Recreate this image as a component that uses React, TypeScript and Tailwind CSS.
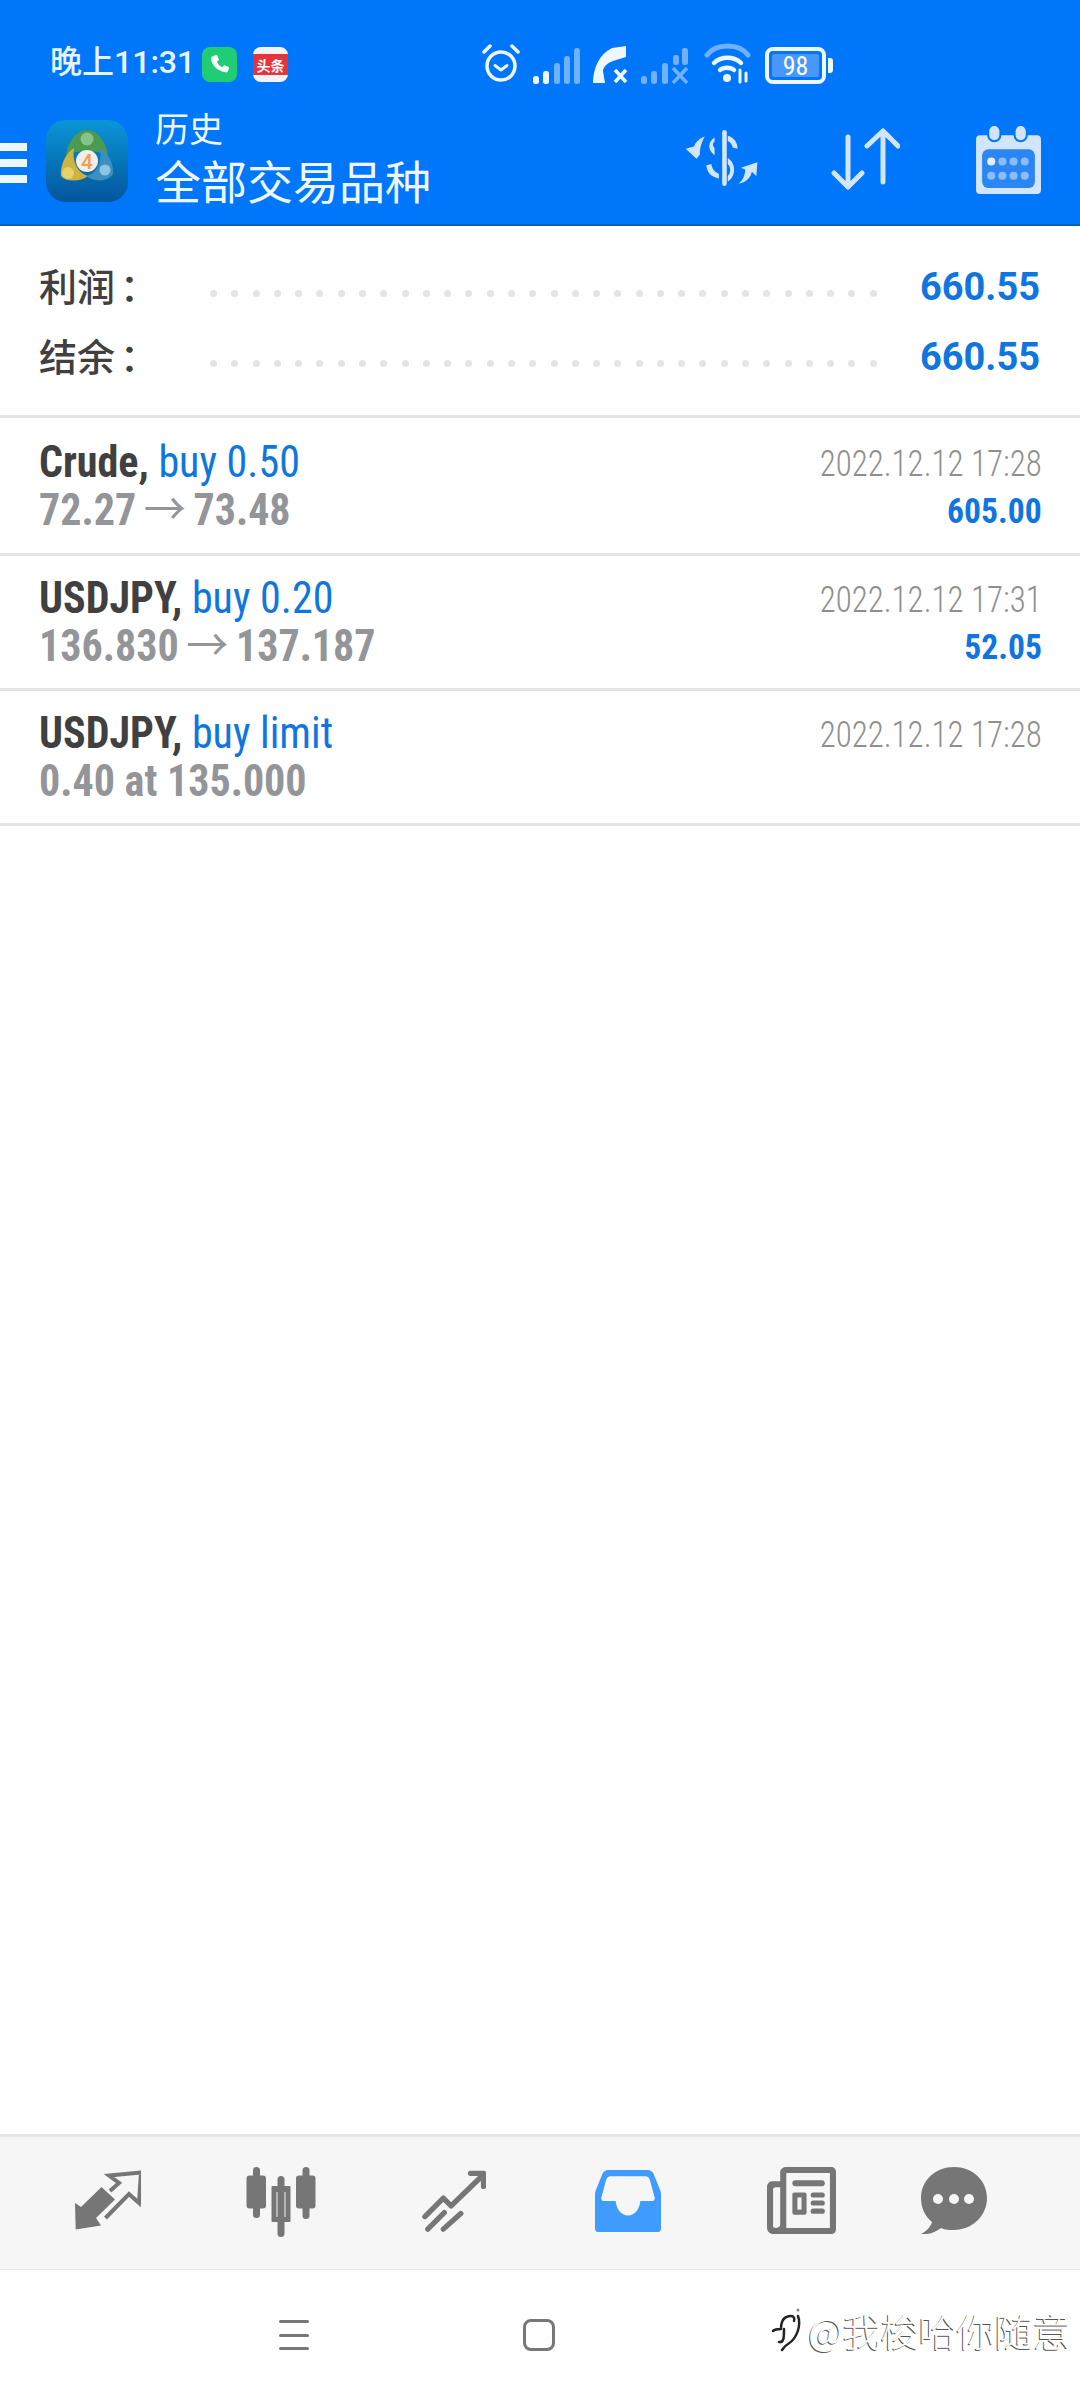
const BLUE_TEXT = "text-[#0f76e0]";

const HEADER_ICON = "#d3e5fd";
const NAV_ICON = "#767676";
const BAR_ON = "#eef6ff";
const BAR_OFF = "#6fb0ff";

function StatusBar() {
  return (
    <div className="flex h-[102px] items-end pb-[20px] pl-[50px] text-white">
      <span className="w-[146px] whitespace-nowrap text-[32px] leading-[40px] font-['Roboto','Noto_Sans_CJK_SC',sans-serif] font-medium text-[#e8f3ff]">
        晚上11:31
      </span>
      <div className="ml-[6px] flex h-[35px] w-[35px] items-center justify-center rounded-[8px] bg-[#1fce74]">
        <svg width="23" height="23" viewBox="0 0 24 24" fill="#fff">
          <path d="M6.600 2.500 9.500 2l2 5-2.200 2c.9 2.400 2.900 4.700 5.600 5.800l2-2.200 5 2.200-.6 3.200c-.3 1.400-1.500 2.400-3 2.200C10 19 3.500 12.500 3.200 6c0-1.800 1.700-3.200 3.400-3.500z" />
        </svg>
      </div>
      <div className="ml-[16px] flex h-[35px] w-[35px] items-center justify-center overflow-hidden rounded-[8px] bg-[#f4f4f4]">
        <div className="flex h-[21px] w-full items-center justify-center bg-[#e6333c] text-[14px] leading-none font-bold text-white font-['Noto_Sans_CJK_SC',sans-serif] whitespace-nowrap">
          头条
        </div>
      </div>
      <div className="ml-[193px] -mb-[2px] flex items-end gap-[12px]">
        <svg width="40" height="42" viewBox="0 0 40 42" fill="none" stroke={BAR_ON} strokeWidth="3.500" strokeLinecap="round" strokeLinejoin="round">
          <circle cx="20" cy="24" r="14" />
          <path d="M14 23.500 20 28l6-4.500" strokeWidth="3" />
          <path d="M3 10 9 4M37 10l-6-6" />
        </svg>
        <svg width="48" height="37" viewBox="0 0 48 37">
          <rect x="0" y="29" width="6" height="8" rx="2.500" fill={BAR_ON} />
          <rect x="10" y="24" width="6" height="13" rx="2.500" fill={BAR_ON} />
          <rect x="21" y="16" width="6" height="21" rx="2.500" fill={BAR_OFF} />
          <rect x="31" y="9" width="6" height="28" rx="2.500" fill={BAR_OFF} />
          <rect x="41" y="1" width="6" height="36" rx="2.500" fill={BAR_OFF} />
        </svg>
        <svg width="36" height="39" viewBox="0 0 36 39">
          <path d="M0 38C0 24 6 9 19 3L33 1v11l-10 3C15 17 10 22 10 26l2 12z" fill={BAR_ON} />
          <path d="m22 25 11 12m0-12L22 37" stroke={BAR_ON} strokeWidth="3.500" />
        </svg>
        <svg width="48" height="37" viewBox="0 0 48 37" fill={BAR_OFF}>
          <rect x="0" y="29" width="6" height="8" rx="2.500" />
          <rect x="10" y="24" width="6" height="13" rx="2.500" />
          <rect x="21" y="16" width="6" height="21" rx="2.500" />
          <rect x="32" y="8" width="6" height="10" rx="2.500" />
          <rect x="41" y="1" width="6" height="17" rx="2.500" />
          <path d="m32 21 14 15m0-15L32 36" stroke={BAR_OFF} strokeWidth="3.500" />
        </svg>
        <svg width="47" height="42" viewBox="0 0 47 42" className="ml-[3px]" fill="none" strokeLinecap="round">
          <path d="M3 13C12 1 35 1 44 13" stroke={BAR_OFF} strokeWidth="5" />
          <path d="M10 21c7-7 20-7 27 0" stroke={BAR_ON} strokeWidth="4.500" />
          <path d="M16 28c3-3 11-3 14 0" stroke={BAR_ON} strokeWidth="4.500" />
          <circle cx="23" cy="36" r="4" fill={BAR_ON} />
          <path d="M36 28v12M42 31v8" stroke={BAR_ON} strokeWidth="3" />
        </svg>
        <div className="ml-[2px] flex items-center">
          <div className="flex h-[37px] w-[61px] items-center rounded-[8px] border-[4px] border-[#eef6ff] p-[3px]">
            <div className="flex h-full w-full items-center justify-center rounded-[2px] bg-[#4a97fb] font-['Roboto',sans-serif] text-[26px] [font-stretch:75%] leading-none text-white">
              98
            </div>
          </div>
          <div className="ml-[2px] h-[15px] w-[5px] rounded-r-[3px] bg-[#eef6ff]" />
        </div>
      </div>
    </div>
  );
}

function MtLogo() {
  return (
    <svg width="82" height="82" viewBox="0 0 82 82">
      <defs>
        <linearGradient id="logoBg" x1="0" y1="0" x2="0" y2="1">
          <stop offset="0" stopColor="#0a96d8" />
          <stop offset="1" stopColor="#04559c" />
        </linearGradient>
      </defs>
      <rect width="82" height="82" rx="20" fill="url(#logoBg)" />
      <path d="M41 10c11 0 19 12 21 25-7-5-35-5-42 0 2-13 10-25 21-25z" fill="#4c9a52" />
      <circle cx="41" cy="19" r="6.500" fill="#86c48a" />
      <path d="M28 28C18 34 14 48 15 56c5 6 19 6 27 0-12-4-16-16-14-28z" fill="#cdb33f" />
      <circle cx="22" cy="53" r="6" fill="#e4d26c" />
      <path d="M54 28c10 6 14 18 13 26-5 8-19 8-27 2 12-2 16-16 14-28z" fill="#3c8fbe" />
      <circle cx="59" cy="50" r="5.500" fill="#8cc6e4" />
      <circle cx="41" cy="41" r="11" fill="#f3efe6" />
      <text x="41" y="49" textAnchor="middle" fontSize="21" fontWeight="500" fill="#ee9f55" fontFamily="Roboto">4</text>
    </svg>
  );
}

function TitleBar() {
  return (
    <div className="flex h-[124px] border-b-[2px] border-[#0f5fb8]">
      <div className="mt-[41px] flex h-[40px] w-[27px] flex-col justify-between">
        <div className="h-[8px] bg-[#eef6ff]" />
        <div className="h-[8px] bg-[#eef6ff]" />
        <div className="h-[8px] bg-[#eef6ff]" />
      </div>
      <div className="ml-[19px] mt-[18px]">
        <MtLogo />
      </div>
      <div className="ml-[27px] flex flex-col font-['Noto_Sans_CJK_SC',sans-serif] text-[#eef6ff]">
        <span className="mt-[6px] text-[34px] leading-[40px]">历史</span>
        <span className="mt-[3px] text-[46px] leading-[56px] whitespace-nowrap">全部交易品种</span>
      </div>
      <div className="ml-auto mr-[39px] mt-[23px] flex items-start">
        <svg width="74" height="58" viewBox="45 65 225 170" className="mt-[4px]" fill={HEADER_ICON}>
          <rect x="158" y="65" width="14" height="170" rx="7" />
          <path d="M135 88c-20 12-23 37 0 54v-22c-7-8-7-15 0-20z" />
          <path d="M175 82c15 3 30 18 30 40l-15-4c-2-10-7-16-15-20z" />
          <path d="M175 150c25 15 27 55 0 72v-17c10-10 10-27 0-37z" />
          <path d="m110 172 15-4c3 17 10 24 23 30v14c-23-4-36-17-38-40z" />
          <path d="M105 85c-10 20-15 33-15 55l-10 12-33-30 25-7c6-15 18-25 33-30z" />
          <path d="M208 228c14-10 20-28 20-43l-13-5 50-17-3 42-14-13c-3 18-18 33-40 36z" />
        </svg>
        <svg width="69" height="62" viewBox="0 0 69 62" className="ml-[72px] mt-[3px]" fill="none" stroke={HEADER_ICON} strokeWidth="5" strokeLinecap="round" strokeLinejoin="round">
          <path d="M17 9v50M3 45l14 14 14-14" />
          <path d="M52 3v51M36 18 52 3l15 15" />
        </svg>
        <svg width="65" height="69" viewBox="0 0 64 68" className="ml-[76px]">
          <rect x="0" y="10" width="64" height="58" rx="4" fill={HEADER_ICON} />
          <rect x="12" y="0" width="12" height="16" rx="6" fill={HEADER_ICON} stroke="#0077fb" strokeWidth="2" />
          <rect x="38" y="0" width="12" height="16" rx="6" fill={HEADER_ICON} stroke="#0077fb" strokeWidth="2" />
          <rect x="6" y="24" width="52" height="38" rx="6" fill="#2a86f3" />
          <circle cx="15" cy="36" r="4" fill="#e4effd" />
          {[26, 37, 48].map((x) => (
            <circle key={x} cx={x} cy="36" r="4" fill="#8dbdf8" />
          ))}
          {[15, 26, 37, 48].map((x) => (
            <circle key={x} cx={x} cy="50" r="4" fill="#8dbdf8" />
          ))}
        </svg>
      </div>
    </div>
  );
}

function SummaryRow({ label, value }: { label: string; value: string }) {
  return (
    <div className="flex h-[70px] items-center pl-[39px] pr-[40px]">
      <span className="mb-[5px] w-[171px] whitespace-nowrap text-[38px] font-medium leading-[46px] text-[#404040] font-['Noto_Sans_CJK_SC',sans-serif]">
        {label}
        <span className="ml-[5px]">：</span>
      </span>
      <div className="mt-[12px] flex w-[667px] justify-between">
        {Array.from({ length: 32 }, (_, i) => (
          <span key={i} className="h-[7px] w-[7px] rounded-full bg-[#e4e4e4]" />
        ))}
      </div>
      <span className={`ml-auto font-['Roboto',sans-serif] text-[38px] font-bold leading-[46px] ${BLUE_TEXT}`}>
        {value}
      </span>
    </div>
  );
}

type Trade = {
  readonly symbol: string;
  readonly action: string;
  readonly detail: readonly string[];
  readonly time: string;
  readonly profit?: string;
};

const TRADES: readonly Trade[] = [
  { symbol: "Crude,", action: "buy 0.50", detail: ["72.27", "73.48"], time: "2022.12.12 17:28", profit: "605.00" },
  { symbol: "USDJPY,", action: "buy 0.20", detail: ["136.830", "137.187"], time: "2022.12.12 17:31", profit: "52.05" },
  { symbol: "USDJPY,", action: "buy limit", detail: ["0.40 at 135.000"], time: "2022.12.12 17:28" },
];

function TradeRow({ trade }: { trade: Trade }) {
  return (
    <div className="flex h-[135px] justify-between border-b-[3px] border-[#e4e4e4] pl-[39px] pr-[38px] pt-[18px] font-['Roboto',sans-serif] [font-stretch:75%] first:h-[138px] first:pt-[20px]">
      <div className="flex origin-left scale-x-[0.955] flex-col">
        <div className="whitespace-nowrap text-[44px] leading-[48px]">
          <span className="font-bold text-[#404040]">{trade.symbol}</span>{" "}
          <span className={BLUE_TEXT}>{trade.action}</span>
        </div>
        <div className="h-[48px] whitespace-nowrap text-[44px] font-bold leading-[48px] text-[#939598]">
          {trade.detail[0]}
          {trade.detail[1] && (
            <>
              <span className="mx-[8px] font-['Noto_Sans_CJK_SC',sans-serif] font-normal leading-[0]">→</span>
              {trade.detail[1]}
            </>
          )}
        </div>
      </div>
      <div className="flex flex-col items-end">
        <span className="mt-[4px] origin-right scale-x-[0.915] whitespace-nowrap text-[36px] font-light leading-[44px] text-[#8f8f8f]">
          {trade.time}
        </span>
        {trade.profit && (
          <span className={`mt-[4px] origin-right scale-x-[0.96] text-[35px] font-bold leading-[44px] ${BLUE_TEXT}`}>
            {trade.profit}
          </span>
        )}
      </div>
    </div>
  );
}

function BottomNav() {
  return (
    <div className="flex h-[136px] items-start border-t-[3px] border-b-[1px] border-t-[#e6e6e6] border-b-[#e8e8e8] bg-[#f6f6f6] pl-[75px] pt-[33px]">
      <svg width="66" height="60" viewBox="0 0 66 60" fill={NAV_ICON}>
        <path d="M0 33l6 4L26.500 17 40 29.500 21 48l5 7.500-25.300 4z" />
        <path d="M30.500 48 54 24l10 9 2-30.500L34 5.500 44 13l-9 8" fill="none" stroke={NAV_ICON} strokeWidth="4" />
      </svg>
      <svg width="70" height="70" viewBox="0 0 69 70" className="ml-[105px] -mt-[3px]" fill={NAV_ICON}>
        <rect x="6.500" y="0" width="7" height="51" rx="3.500" />
        <rect x="0" y="8.600" width="19.500" height="33" rx="3" />
        <rect x="31" y="9" width="7" height="61" rx="3.500" />
        <path fillRule="evenodd" d="M26 19h17a1 1 0 0 1 1 1v34a1 1 0 0 1-1 1H26a1 1 0 0 1-1-1V20a1 1 0 0 1 1-1zm4 6v25h9V25z" />
        <rect x="56" y="0" width="7" height="52" rx="3.500" />
        <rect x="49.500" y="8.600" width="19.500" height="33" rx="3" />
      </svg>
      <svg width="64" height="62" viewBox="0 0 66 62" className="ml-[106px]" fill="none" stroke={NAV_ICON} strokeWidth="5.500" strokeLinecap="round" strokeLinejoin="round">
        <path d="M3 47 22 28l8 8L60 7M50 2.500h13.500V16" />
        <path d="M6 60 23 43M22 60l18-16" />
      </svg>
      <svg width="66" height="62" viewBox="0 0 64 60" className="ml-[109px]">
        <path d="M13 0h38c3 0 5 2 6 4l6 15c1 2 1 4 1 6v32c0 2-1 3-3 3H3c-2 0-3-1-3-3V25c0-2 0-4 1-6L7 4c1-2 3-4 6-4z" fill="#3f9bfe" />
        <path d="M15 6h34c2 0 3 1 4 3l5 18c0 2-1 3-3 3H44c-1 8-5 14-12 14s-11-6-12-14H9c-2 0-3-1-3-3l5-18c1-2 2-3 4-3z" fill="#f6f6f6" />
      </svg>
      <svg width="69" height="67" viewBox="0 0 68 66" className="ml-[106px] -mt-[3px]">
        <path d="M19 0h44c3 0 5 2 5 5v56c0 3-2 5-5 5H6c-3 0-6-3-6-6V20c0-3 2-6 5-6h8V5c0-3 3-5 6-5zm-6 20H8c-1 0-2 1-2 2v36c0 2 1 2 3 2s4-1 4-3zm6-14v54h43V6z" fill={NAV_ICON} fillRule="evenodd" />
        <rect x="25" y="13" width="32" height="6" rx="3" fill={NAV_ICON} />
        <rect x="25" y="25" width="14" height="22" rx="2" fill={NAV_ICON} />
        <rect x="30" y="30" width="4" height="12" fill="#f6f6f6" />
        <rect x="43" y="25" width="14" height="5" rx="2.500" fill={NAV_ICON} />
        <rect x="43" y="33" width="14" height="5" rx="2.500" fill={NAV_ICON} />
        <rect x="43" y="41" width="14" height="5" rx="2.500" fill={NAV_ICON} />
      </svg>
      <svg width="66" height="67" viewBox="0 0 66 67" className="ml-[85px] -mt-[3px]">
        <path d="M33 0C15 0 0 13 0 31c0 10 4 18 11 24-1 4-5 9-11 12 8 1 15-2 20-6 4 2 8 2 13 2 18 0 33-14 33-32S51 0 33 0z" fill={NAV_ICON} />
        <circle cx="17" cy="32" r="5" fill="#f6f6f6" />
        <circle cx="33" cy="32" r="5" fill="#f6f6f6" />
        <circle cx="48" cy="32" r="5" fill="#f6f6f6" />
      </svg>
    </div>
  );
}

function SystemBar() {
  return (
    <div className="relative flex h-[130px] items-start bg-white pl-[279px] pt-[50px]">
      <div className="flex h-[30px] w-[30px] flex-col justify-between">
        <div className="h-[3px] rounded bg-[#777777]" />
        <div className="h-[3px] rounded bg-[#777777]" />
        <div className="h-[3px] rounded bg-[#777777]" />
      </div>
      <div className="ml-[214px] -mt-[1px] h-[32px] w-[32px] rounded-[8px] border-[3px] border-[#777777]" />
      <div className="absolute left-[770px] top-[36px] flex items-center font-['Noto_Sans_CJK_SC',sans-serif] text-[38px] font-light leading-[48px] whitespace-nowrap text-white [text-shadow:-1px_1px_0_#555555]">
        <svg width="36" height="46" viewBox="0 0 36 46" fill="none" stroke="#222222" strokeWidth="2.500" strokeLinecap="round">
          <path d="M3 24c2-2 5-2 8-2M11 22c0-8 3-13 10-13 3 0 4 3 3 5M14 22c0 8 0 14-5 13" />
          <path d="M28 9c3 8 0 22-10 28-2 1-4 3-6 6" />
          <circle cx="28" cy="3" r="1.500" fill="#888888" stroke="none" />
        </svg>
        <span className="ml-[2px]">@我梭哈你随意</span>
      </div>
    </div>
  );
}

export default function App() {
  return (
    <div className="flex h-[2400px] w-[1080px] flex-col overflow-hidden bg-white">
      <div className="bg-[#0077fb]">
        <StatusBar />
        <TitleBar />
      </div>
      <div className="border-b-[3px] border-[#e4e4e4] pb-[23px] pt-[26px]">
        <SummaryRow label="利润" value="660.55" />
        <SummaryRow label="结余" value="660.55" />
      </div>
      <div>
        {TRADES.map((trade) => (
          <TradeRow key={trade.symbol + trade.action} trade={trade} />
        ))}
      </div>
      <div className="flex-1" />
      <BottomNav />
      <SystemBar />
    </div>
  );
}
